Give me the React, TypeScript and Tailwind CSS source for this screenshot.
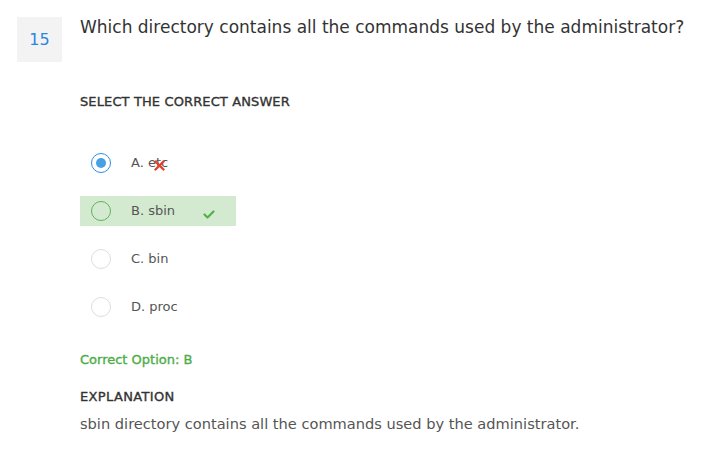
import React from "react";

const Radio = ({ kind }: { kind: "selected" | "correct" | "none" }) => {
  if (kind === "selected")
    return (
      <span className="flex h-[20px] w-[20px] shrink-0 items-center justify-center rounded-full border-[1.5px] border-[#2f8ee5] bg-white">
        <span className="h-[10px] w-[10px] rounded-full bg-[#46a1e4]" />
      </span>
    );
  if (kind === "correct")
    return <span className="h-[20px] w-[20px] shrink-0 rounded-full border-[1.5px] border-[#5fb35a]" />;
  return <span className="h-[20px] w-[20px] shrink-0 rounded-full border-[1.5px] border-[#dedede] bg-white" />;
};

export default function App() {
  return (
    <div
      className="h-[456px] w-[719px] bg-white pl-[17px] pt-[17px] text-[#333]"
      style={{ fontFamily: '"DejaVu Sans", "Open Sans", sans-serif' }}
    >
      <div className="flex gap-[18px]">
        <div className="flex h-[45px] w-[45px] shrink-0 items-center justify-center bg-[#f3f3f3] text-[16px] text-[#2c86e0]">
          15
        </div>
        <div className="flex flex-col">
          <div className="-mt-[2px] whitespace-nowrap text-[17px] leading-[24px] text-[#333]">
            Which directory contains all the commands used by the administrator?
          </div>
          <div className="mt-[56px] text-[13px] leading-[14px] tracking-[0.12px] text-[#333] [-webkit-text-stroke:0.35px_#333]">
            SELECT THE CORRECT ANSWER
          </div>
          <div className="mt-[39px] flex flex-col gap-[18px]">
            <div className="flex h-[30px] w-[156px] items-center gap-[20px] pl-[11px] text-[13px] text-[#555]">
              <Radio kind="selected" />
              <span className="relative">
                A. etc
                <svg className="absolute left-[23px] top-[7px]" width="11" height="11" viewBox="0 0 11 11">
                  <path d="M1.5 1.5 L9.5 9.5 M9.5 1.5 L1.5 9.5" stroke="#e0412f" strokeWidth="2.4" strokeLinecap="round" />
                </svg>
              </span>
            </div>
            <div className="flex h-[30px] w-[156px] items-center gap-[20px] bg-[#d4ead0] pl-[11px] text-[13px] text-[#555]">
              <Radio kind="correct" />
              <span>B. sbin</span>
              <svg className="ml-[8px] mt-[6px]" width="12" height="9" viewBox="0 0 12 9">
                <path d="M1.5 4.5 L4.5 7.5 L10.5 1.5" fill="none" stroke="#52b04a" strokeWidth="2.2" strokeLinecap="round" strokeLinejoin="round" />
              </svg>
            </div>
            <div className="flex h-[30px] w-[156px] items-center gap-[20px] pl-[11px] text-[13px] text-[#555]">
              <Radio kind="none" />
              <span>C. bin</span>
            </div>
            <div className="flex h-[30px] w-[156px] items-center gap-[20px] pl-[11px] text-[13px] text-[#555]">
              <Radio kind="none" />
              <span>D. proc</span>
            </div>
          </div>
          <div className="mt-[31px] text-[13px] leading-[14px] text-[#4cad47] [-webkit-text-stroke:0.35px_#4cad47]">
            Correct Option: B
          </div>
          <div className="mt-[23px] text-[13px] leading-[14px] tracking-[0.35px] text-[#333] [-webkit-text-stroke:0.35px_#333]">
            EXPLANATION
          </div>
          <div className="mt-[10px] whitespace-nowrap text-[14.6px] leading-[20px] text-[#555]">
            sbin directory contains all the commands used by the administrator.
          </div>
        </div>
      </div>
    </div>
  );
}
